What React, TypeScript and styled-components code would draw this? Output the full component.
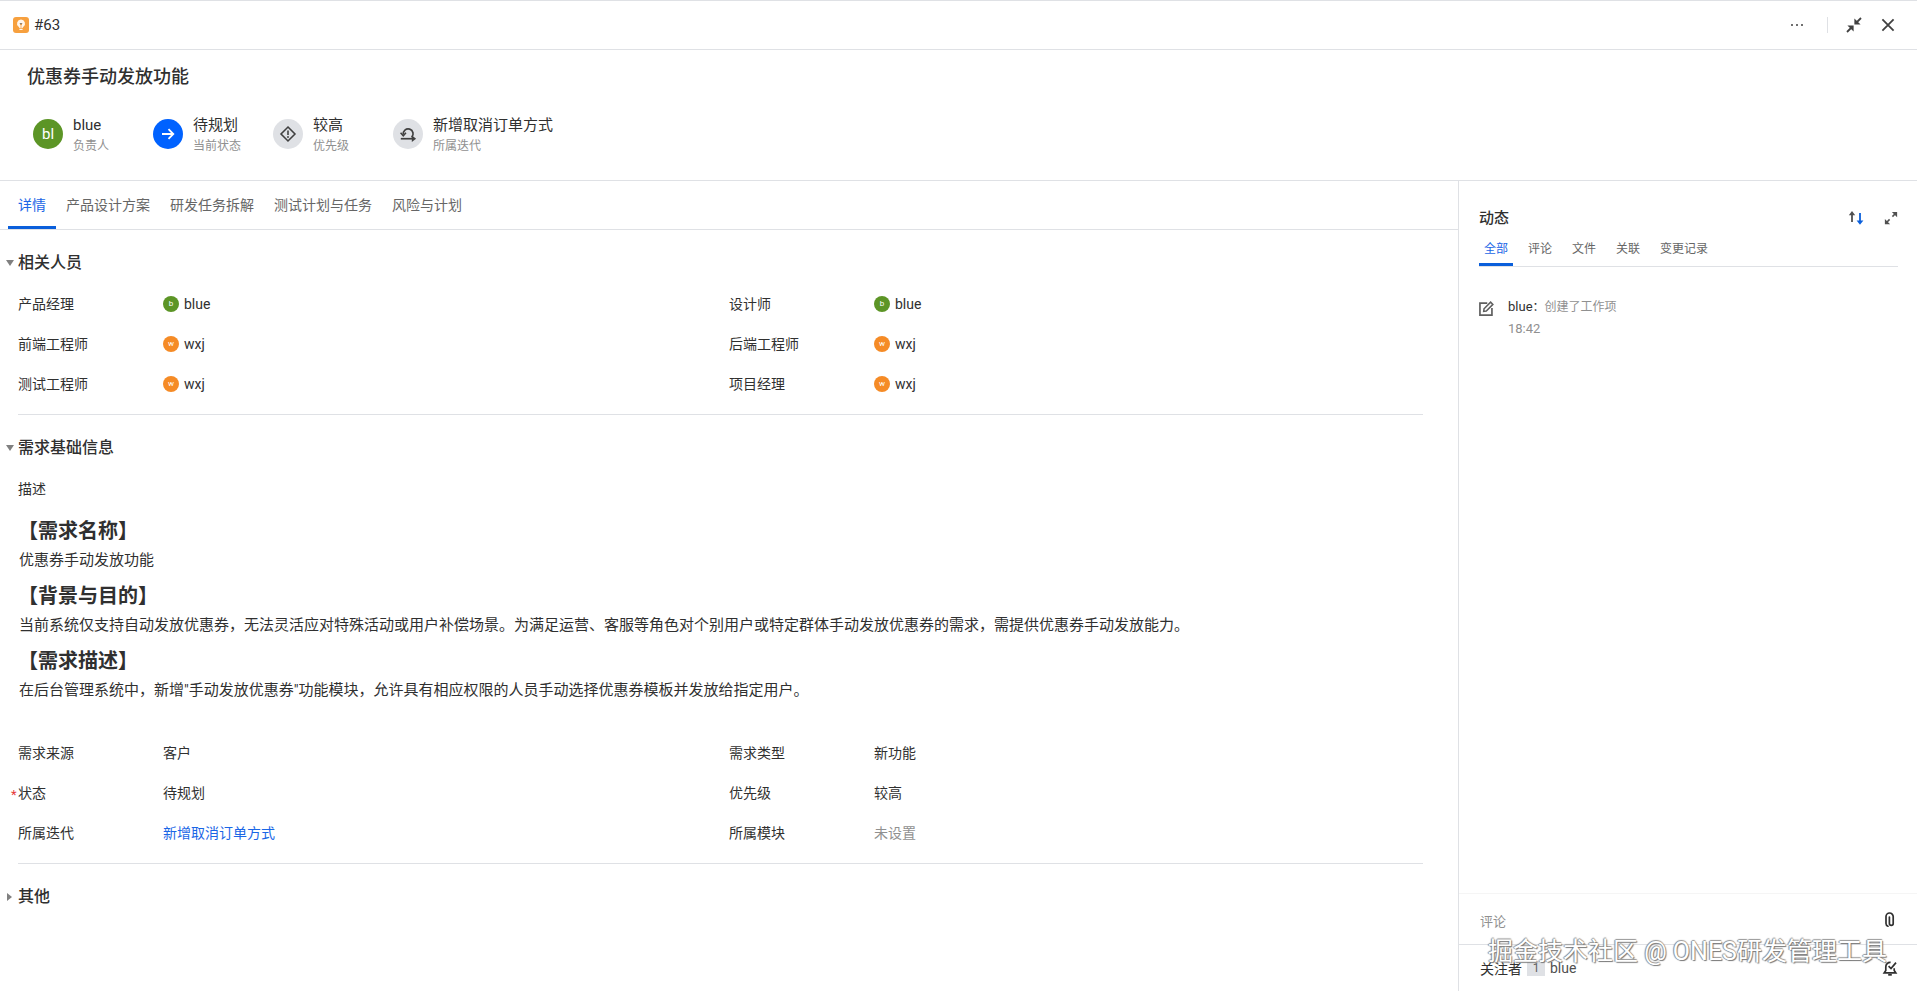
import React from 'react';
import styled, { createGlobalStyle } from 'styled-components';

const Global = createGlobalStyle`
  html, body { margin: 0; padding: 0; background: #fff; }
  body { font-family: Roboto, "Noto Sans CJK SC", sans-serif; color: #303030; }
  * { box-sizing: border-box; }
`;

const Page = styled.div`
  position: relative;
  width: 1917px;
  height: 991px;
  display: flex;
  flex-direction: column;
  border-top: 1px solid #dfe1e5;
  overflow: hidden;
`;
const TopBar = styled.header`
  height: 49px;
  flex: none;
  display: flex;
  align-items: center;
  padding: 0 21px 0 13px;
  border-bottom: 1px solid #dfe1e5;
`;
const IssueNo = styled.span`
  font-size: 15px;
  margin-left: 5px;
  color: #303030;
`;
const Spacer = styled.div`
  flex: 1;
`;
const TopActions = styled.div`
  display: flex;
  align-items: center;
`;
const Separator = styled.span`
  width: 1px;
  height: 16px;
  background: #dfe1e5;
  margin: 0 18px 0 22px;
`;
const CloseSlot = styled.span`
  display: block;
  margin-left: 18px;
`;
const Summary = styled.section`
  flex: none;
  height: 131px;
  padding: 14px 27px 0;
  border-bottom: 1px solid #dfe1e5;
`;
const Title = styled.h1`
  margin: 0;
  font-size: 18px;
  line-height: 26px;
  font-weight: 500;
  color: #303030;
`;
const InfoRow = styled.div`
  display: flex;
  margin: 29px 0 0 6px;
`;
const InfoItem = styled.div`
  display: flex;
  gap: 10px;
  min-width: 120px;
`;
const Round = styled.div<{ $bg: string }>`
  width: 30px;
  height: 30px;
  border-radius: 50%;
  background: ${p => p.$bg};
  color: #fff;
  font-size: 15px;
  display: flex;
  align-items: center;
  justify-content: center;
  flex: none;
`;
const InfoText = styled.div`
  display: flex;
  flex-direction: column;
  margin-top: -4px;
`;
const InfoName = styled.span`
  font-size: 15px;
  line-height: 20px;
  color: #303030;
`;
const InfoSub = styled.span`
  font-size: 12px;
  line-height: 20px;
  margin-top: 1px;
  color: #909090;
`;
const Body = styled.div`
  flex: 1;
  display: flex;
  min-height: 0;
`;
const Main = styled.main`
  width: 1459px;
  flex: none;
  border-right: 1px solid #dfe1e5;
`;
const TabBar = styled.nav`
  height: 49px;
  display: flex;
  padding-left: 8px;
  border-bottom: 1px solid #dfe1e5;
`;
const Tab = styled.div<{ $on?: boolean }>`
  height: 48px;
  padding: 0 10px;
  font-size: 14px;
  line-height: 48px;
  color: ${p => (p.$on ? '#1a66e6' : '#666')};
  border-bottom: 3px solid ${p => (p.$on ? '#0a5fdb' : 'transparent')};
`;
const Content = styled.div`
  padding: 20px 35px 0 18px;
`;
const SectionHead = styled.h2`
  margin: 0 0 8px -12px;
  display: flex;
  align-items: center;
  gap: 4px;
  font-size: 16px;
  line-height: 26px;
  font-weight: 500;
  color: #303030;
`;
const Caret = styled.span<{ $open?: boolean }>`
  width: 0;
  height: 0;
  flex: none;
  ${p =>
    p.$open
      ? 'border-left: 4px solid transparent; border-right: 4px solid transparent; border-top: 6px solid #808080;'
      : 'border-top: 4px solid transparent; border-bottom: 4px solid transparent; border-left: 5px solid #808080; margin: 0 2px 0 1px;'}
`;
const FieldGrid = styled.div`
  display: grid;
  grid-template-columns: 145px 566px 145px 1fr;
  grid-auto-rows: 40px;
  align-items: center;
  font-size: 14px;
  line-height: 20px;
`;
const Label = styled.div<{ $req?: boolean }>`
  position: relative;
  color: #303030;
  ${p =>
    p.$req
      ? `&::before { content: '*'; position: absolute; left: -7px; top: 2px; color: #e63a3a; font-size: 13px; }`
      : ''}
`;
const Value = styled.div<{ $tone?: 'link' | 'muted' }>`
  display: flex;
  align-items: center;
  gap: 5px;
  color: ${p => (p.$tone === 'link' ? '#1a66e6' : p.$tone === 'muted' ? '#909090' : '#303030')};
`;
const MiniAvatar = styled.span<{ $bg: string }>`
  width: 16px;
  height: 16px;
  border-radius: 50%;
  background: ${p => p.$bg};
  color: #fff;
  font-size: 8px;
  display: flex;
  align-items: center;
  justify-content: center;
`;
const Divider = styled.hr`
  border: 0;
  border-top: 1px solid #dfe1e5;
  margin: 10px 0 20px;
`;
const RichHead = styled.h3`
  margin: 7px 0 -2px;
  font-size: 20px;
  line-height: 30px;
  font-weight: 600;
  color: #303030;
`;
const RichText = styled.p`
  margin: 0 0 -2px 1px;
  font-size: 15px;
  line-height: 32px;
  color: #303030;
`;
const RichBlock = styled.div`
  margin-bottom: 29px;
`;
const Side = styled.aside`
  flex: 1;
  min-width: 0;
  display: flex;
  flex-direction: column;
`;
const Activity = styled.div`
  flex: 1;
  padding: 25px 19px 0 20px;
`;
const SideHead = styled.div`
  display: flex;
  align-items: center;
  height: 24px;
`;
const SideTitle = styled.h2`
  margin: 0;
  flex: 1;
  font-size: 15px;
  font-weight: 500;
  line-height: 24px;
`;
const SideIcons = styled.div`
  display: flex;
  align-items: center;
  gap: 20px;
`;
const SideTabs = styled.div`
  display: flex;
  gap: 10px;
  height: 34px;
  margin-top: 3px;
  border-bottom: 1px solid #dfe1e5;
`;
const SideTab = styled.div<{ $on?: boolean }>`
  height: 33px;
  padding: 0 5px;
  font-size: 12px;
  line-height: 32px;
  color: ${p => (p.$on ? '#1a66e6' : '#666')};
  border-bottom: 3px solid ${p => (p.$on ? '#0a5fdb' : 'transparent')};
`;
const Entry = styled.div`
  display: flex;
  gap: 14px;
  margin-top: 29px;
`;
const EntryIcon = styled.span`
  display: block;
  margin-top: 5px;
`;
const EntryBody = styled.div`
  font-size: 12px;
  line-height: 22px;
`;
const EntryName = styled.span`
  font-size: 13px;
`;
const EntryTime = styled.span`
  font-size: 13px;
  color: #909090;
`;
const Muted = styled.span`
  color: #909090;
`;
const CommentBox = styled.div`
  flex: none;
  height: 52px;
  display: flex;
  align-items: center;
  justify-content: space-between;
  padding: 2px 19px 0 21px;
  border-top: 1px solid #f5f5f5;
  border-bottom: 1px solid #dfe1e5;
  font-size: 13px;
  color: #909090;
`;
const Watchers = styled.div`
  flex: none;
  height: 46px;
  display: flex;
  align-items: center;
  padding: 0 19px 0 21px;
  font-size: 14px;
  color: #505050;
`;
const WatchLabel = styled.span`
  font-size: 14px;
  color: #303030;
`;
const Count = styled.span`
  width: 18px;
  height: 15px;
  margin: 0 5px 0 5px;
  background: #dfe1e5;
  color: #606060;
  font-size: 12px;
  display: flex;
  align-items: center;
  justify-content: center;
`;
const Watermark = styled.div`
  position: absolute;
  left: 1488px;
  top: 933px;
  font-size: 25px;
  line-height: 36px;
  white-space: nowrap;
  color: #fff;
  text-shadow: 1px 1px 1px #777, -1px 0 1px #888, 0 -1px 1px #999;
`;

const Icon = ({ size = 16, children }: { size?: number; children: React.ReactNode }) => (
  <svg width={size} height={size} viewBox="0 0 16 16" fill="none" style={{ display: 'block', flex: 'none' }}>
    {children}
  </svg>
);

const Logo = () => (
  <svg width="16" height="16" viewBox="0 0 16 16" style={{ display: 'block', flex: 'none' }}>
    <rect width="16" height="16" rx="3" fill="#f7a03e" />
    <path d="M8 2.6a4 4 0 0 0-2.4 7.2c.5.4.7.8.7 1.3h3.4c0-.5.2-.9.7-1.3A4 4 0 0 0 8 2.6z" fill="#fff" opacity=".9" />
    <rect x="6.4" y="11.8" width="3.2" height="1.1" fill="#fff" />
    <path d="M6.8 6.6 8 8l1.2-1.4M8 8v3" stroke="#f7a03e" strokeWidth=".8" />
  </svg>
);
const Dots = () => (
  <Icon>
    <circle cx="3" cy="8" r="1" fill="#404040" />
    <circle cx="8" cy="8" r="1" fill="#404040" />
    <circle cx="13" cy="8" r="1" fill="#404040" />
  </Icon>
);
const Inward = () => (
  <Icon>
    <path d="M15 1 11 5" stroke="#404040" strokeWidth="1.8" />
    <path d="M8.4 1.4v6.2h6.2z" fill="#404040" />
    <path d="M1 15 5 11" stroke="#404040" strokeWidth="1.8" />
    <path d="M7.6 8.4H1.4l6.2 6.2z" fill="#404040" />
  </Icon>
);
const Close = () => (
  <Icon>
    <path d="M2.4 2.4l11.2 11.2M13.6 2.4 2.4 13.6" stroke="#404040" strokeWidth="1.8" />
  </Icon>
);
const ArrowRight = () => (
  <Icon>
    <path d="M2 8h11M8.5 3.2 13.3 8l-4.8 4.8" stroke="#fff" strokeWidth="1.8" />
  </Icon>
);
const Diamond = () => (
  <Icon size={18}>
    <path d="M8 1.8 14.2 8 8 14.2 1.8 8z" stroke="#404040" strokeWidth="1.4" />
    <path d="M8 4.8v4" stroke="#404040" strokeWidth="1.4" />
    <circle cx="8" cy="10.6" r=".85" fill="#404040" />
  </Icon>
);
const Iteration = () => (
  <Icon size={18}>
    <path d="M3.8 8.6A4.4 4.4 0 1 1 11.2 11" stroke="#404040" strokeWidth="1.5" />
    <path d="M1.4 6.8 3.8 9.6 6.2 6.8" stroke="#404040" strokeWidth="1.3" />
    <path d="M1.6 12.2h10.4" stroke="#404040" strokeWidth="1.5" />
    <path d="M11.4 9.2 15.2 12.2l-3.8 3z" fill="#404040" />
  </Icon>
);
const SortIcon = () => (
  <Icon>
    <path d="M4 12V3" stroke="#505050" strokeWidth="1.8" />
    <path d="M.8 5.2 4 1l3.2 4.2z" fill="#505050" />
    <path d="M12 3v10" stroke="#0a5fdb" strokeWidth="1.8" />
    <path d="M8.6 10.4 12 14.8l3.4-4.4z" fill="#0a5fdb" />
  </Icon>
);
const Outward = () => (
  <Icon size={14}>
    <path d="M9.6 6.4 13.4 2.6" stroke="#505050" strokeWidth="1.8" />
    <path d="M9 1h6v6z" fill="#505050" />
    <path d="M6.4 9.6 2.6 13.4" stroke="#505050" strokeWidth="1.8" />
    <path d="M1 9v6h6z" fill="#505050" />
  </Icon>
);
const EditIcon = () => (
  <Icon size={15}>
    <path d="M8.8 2.2H1v12.8h12.8V7.4" stroke="#606060" strokeWidth="1.8" />
    <path d="M5.4 8.2 12.4 1.2l2.4 2.4-7 7-2.8.4z" stroke="#606060" strokeWidth="1.6" />
  </Icon>
);
const Clip = () => (
  <Icon>
    <path
      d="M7.4 5v6.4a1.9 1.9 0 0 0 3.8 0V4.6a3.6 3.6 0 0 0-7.2 0v6.8a3 3 0 0 0 2 2.8"
      stroke="#303030"
      strokeWidth="1.7"
      strokeLinecap="round"
    />
  </Icon>
);
const BellCheck = () => (
  <Icon>
    <path d="M8.6 2.4A4.4 4.4 0 0 0 3.8 7v3.4l-1.6 2.4h11.6l-1.6-2.4V8.2" stroke="#303030" strokeWidth="1.7" />
    <path d="M6.2 14.8h3.6" stroke="#303030" strokeWidth="1.8" />
    <path d="M6.6 6.2 9 8.6 14 2.6" stroke="#303030" strokeWidth="1.7" />
  </Icon>
);

const people: [string, string, string, string][] = [
  ['产品经理', 'blue', '设计师', 'blue'],
  ['前端工程师', 'wxj', '后端工程师', 'wxj'],
  ['测试工程师', 'wxj', '项目经理', 'wxj'],
];

const Person = ({ name }: { name: string }) => (
  <Value>
    <MiniAvatar $bg={name === 'blue' ? '#5c9526' : '#f58b26'}>{name[0]}</MiniAvatar>
    {name}
  </Value>
);

export default function App() {
  return (
    <>
      <Global />
      <Page>
        <TopBar>
          <Logo />
          <IssueNo>#63</IssueNo>
          <Spacer />
          <TopActions>
            <Dots />
            <Separator />
            <Inward />
            <CloseSlot><Close /></CloseSlot>
          </TopActions>
        </TopBar>
        <Summary>
          <Title>优惠券手动发放功能</Title>
          <InfoRow>
            <InfoItem>
              <Round $bg="#5c9526">bl</Round>
              <InfoText>
                <InfoName>blue</InfoName>
                <InfoSub>负责人</InfoSub>
              </InfoText>
            </InfoItem>
            <InfoItem>
              <Round $bg="#0062ff"><ArrowRight /></Round>
              <InfoText>
                <InfoName>待规划</InfoName>
                <InfoSub>当前状态</InfoSub>
              </InfoText>
            </InfoItem>
            <InfoItem>
              <Round $bg="#dfe1e5"><Diamond /></Round>
              <InfoText>
                <InfoName>较高</InfoName>
                <InfoSub>优先级</InfoSub>
              </InfoText>
            </InfoItem>
            <InfoItem>
              <Round $bg="#dfe1e5"><Iteration /></Round>
              <InfoText>
                <InfoName>新增取消订单方式</InfoName>
                <InfoSub>所属迭代</InfoSub>
              </InfoText>
            </InfoItem>
          </InfoRow>
        </Summary>
        <Body>
          <Main>
            <TabBar>
              <Tab $on>详情</Tab>
              <Tab>产品设计方案</Tab>
              <Tab>研发任务拆解</Tab>
              <Tab>测试计划与任务</Tab>
              <Tab>风险与计划</Tab>
            </TabBar>
            <Content>
              <SectionHead><Caret $open />相关人员</SectionHead>
              <FieldGrid>
                {people.map(r => (
                  <React.Fragment key={r[0]}>
                    <Label>{r[0]}</Label>
                    <Person name={r[1]} />
                    <Label>{r[2]}</Label>
                    <Person name={r[3]} />
                  </React.Fragment>
                ))}
              </FieldGrid>
              <Divider />
              <SectionHead><Caret $open />需求基础信息</SectionHead>
              <FieldGrid>
                <Label>描述</Label>
              </FieldGrid>
              <RichBlock>
                <RichHead>【需求名称】</RichHead>
                <RichText>优惠券手动发放功能</RichText>
                <RichHead>【背景与目的】</RichHead>
                <RichText>当前系统仅支持自动发放优惠券，无法灵活应对特殊活动或用户补偿场景。为满足运营、客服等角色对个别用户或特定群体手动发放优惠券的需求，需提供优惠券手动发放能力。</RichText>
                <RichHead>【需求描述】</RichHead>
                <RichText>在后台管理系统中，新增"手动发放优惠券"功能模块，允许具有相应权限的人员手动选择优惠券模板并发放给指定用户。</RichText>
              </RichBlock>
              <FieldGrid>
                <Label>需求来源</Label>
                <Value>客户</Value>
                <Label>需求类型</Label>
                <Value>新功能</Value>
                <Label $req>状态</Label>
                <Value>待规划</Value>
                <Label>优先级</Label>
                <Value>较高</Value>
                <Label>所属迭代</Label>
                <Value $tone="link">新增取消订单方式</Value>
                <Label>所属模块</Label>
                <Value $tone="muted">未设置</Value>
              </FieldGrid>
              <Divider />
              <SectionHead><Caret />其他</SectionHead>
            </Content>
          </Main>
          <Side>
            <Activity>
              <SideHead>
                <SideTitle>动态</SideTitle>
                <SideIcons>
                  <SortIcon />
                  <Outward />
                </SideIcons>
              </SideHead>
              <SideTabs>
                <SideTab $on>全部</SideTab>
                <SideTab>评论</SideTab>
                <SideTab>文件</SideTab>
                <SideTab>关联</SideTab>
                <SideTab>变更记录</SideTab>
              </SideTabs>
              <Entry>
                <EntryIcon><EditIcon /></EntryIcon>
                <EntryBody>
                  <div><EntryName>blue</EntryName>：<Muted>创建了工作项</Muted></div>
                  <EntryTime>18:42</EntryTime>
                </EntryBody>
              </Entry>
            </Activity>
            <CommentBox>
              <span>评论</span>
              <Clip />
            </CommentBox>
            <Watchers>
              <WatchLabel>关注者</WatchLabel>
              <Count>1</Count>
              blue
              <Spacer />
              <BellCheck />
            </Watchers>
          </Side>
        </Body>
        <Watermark>掘金技术社区 @ ONES研发管理工具</Watermark>
      </Page>
    </>
  );
}
